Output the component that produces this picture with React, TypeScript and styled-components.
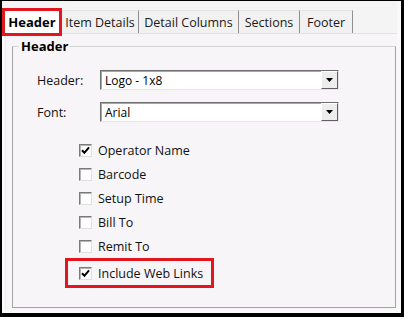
import React from 'react';
import styled, { createGlobalStyle } from 'styled-components';

const GlobalStyle = createGlobalStyle`
  html, body {
    margin: 0;
    padding: 0;
    background: #fff;
  }
  body {
    font-family: "Open Sans", "Noto Sans", sans-serif;
    color: #111;
  }
`;

const Frame = styled.div`
  width: 404px;
  height: 317px;
  box-sizing: border-box;
  border-style: solid;
  border-color: #000;
  border-width: 1px 3px 4px 2px;
  background: #f9f9f9;
  display: flex;
  flex-direction: column;
  padding: 0 4px 3px 0;
`;

const TabStrip = styled.div`
  height: 32px;
  display: flex;
  align-items: flex-end;
  background: #f4f4f4;
  flex-shrink: 0;
`;

const SelectedTab = styled.div`
  position: relative;
  z-index: 1;
  width: 60px;
  height: 28px;
  box-sizing: border-box;
  margin-bottom: -3px;
  border: 3px solid #e2161f;
  background: #fff;
  display: flex;
  align-items: center;
  justify-content: center;
  font-weight: 700;
  font-size: 13px;
  color: #000;
`;

const Tab = styled.div<{ $width: number }>`
  width: ${(p) => p.$width}px;
  height: 23px;
  box-sizing: border-box;
  border-top: 1px solid #e4e4e4;
  border-right: 1px solid #8f8f8f;
  background: #f1f1f1;
  display: flex;
  align-items: center;
  justify-content: center;
  font-size: 12.5px;
  color: #1a1a1a;
`;

const Page = styled.div`
  flex: 1;
  margin-left: 3px;
  display: flex;
  border-top: 1px solid #e2e2e2;
  border-left: 1px solid #ececec;
  background: #f7f5f8;
  padding: 3px 1px 2px 6px;
`;

const GroupBox = styled.fieldset`
  flex: 1;
  margin: 0;
  padding: 0;
  min-width: 0;
  border: 1px solid #a4a4a4;
  border-top-color: #d4d4d4;
  display: flex;
  flex-direction: column;
`;

const Legend = styled.legend`
  margin-left: 6px;
  padding: 0 2px;
  font-weight: 700;
  font-size: 13px;
  color: #000;
`;

const Body = styled.div`
  padding: 15px 0 0 24px;
  display: flex;
  flex-direction: column;
`;

const FieldRow = styled.div`
  display: grid;
  grid-template-columns: 63px 239px;
  align-items: center;
  height: 20px;
  & + & {
    margin-top: 12px;
  }
`;

const FieldLabel = styled.div`
  font-size: 12.5px;
`;

const ComboBox = styled.div`
  height: 20px;
  box-sizing: border-box;
  border: 1px solid;
  border-color: #6f6f6f #e6e6e6 #e6e6e6 #6f6f6f;
  box-shadow: inset 1px 1px 0 #a8a8a8;
  background: #fff;
  display: flex;
  align-items: center;
  justify-content: space-between;
`;

const ComboText = styled.span`
  padding-left: 4px;
  font-size: 12px;
  color: #000;
`;

const DropButton = styled.div`
  width: 17px;
  height: 18px;
  box-sizing: border-box;
  border: 1px solid;
  border-color: #fff #5f5f5f #5f5f5f #fff;
  background: #ededed;
  display: flex;
  align-items: center;
  justify-content: center;
`;

const CheckList = styled.div`
  margin: 16px 0 0 28px;
  display: flex;
  flex-direction: column;
`;

const CheckRow = styled.label`
  height: 24px;
  padding-left: 14px;
  display: flex;
  align-items: center;
  gap: 6px;
  font-size: 12.5px;
  color: #111;
`;

const HighlightRow = styled(CheckRow)`
  width: 149px;
  height: 30px;
  box-sizing: border-box;
  border: 3px solid #e2161f;
  padding-left: 11px;
`;

const Box = styled.span`
  width: 13px;
  height: 13px;
  box-sizing: border-box;
  border: 1px solid;
  border-color: #7a7a7a #e0e0e0 #e0e0e0 #7a7a7a;
  box-shadow: inset 1px 1px 0 #b4b4b4;
  background: #fff;
  display: flex;
  align-items: center;
  justify-content: center;
  flex-shrink: 0;
`;

const Arrow = () => (
  <svg width="7" height="4" viewBox="0 0 7 4">
    <path d="M0 0 H7 L3.5 4 Z" fill="#000" />
  </svg>
);

const CheckBox: React.FC<{ checked?: boolean }> = ({ checked }) => (
  <Box>
    {checked && (
      <svg width="9" height="9" viewBox="0 0 9 9">
        <path d="M1 4.2 L3.4 6.8 L8 1.4" stroke="#000" strokeWidth="2" fill="none" />
      </svg>
    )}
  </Box>
);

const tabs = [
  { label: 'Item Details', width: 77 },
  { label: 'Detail Columns', width: 100 },
  { label: 'Sections', width: 61 },
  { label: 'Footer', width: 53 },
];

const options = [
  { label: 'Operator Name', checked: true },
  { label: 'Barcode', checked: false },
  { label: 'Setup Time', checked: false },
  { label: 'Bill To', checked: false },
  { label: 'Remit To', checked: false },
];

export default function App() {
  return (
    <>
      <GlobalStyle />
      <Frame>
        <TabStrip>
          <SelectedTab>Header</SelectedTab>
          {tabs.map((t) => (
            <Tab key={t.label} $width={t.width}>
              {t.label}
            </Tab>
          ))}
        </TabStrip>
        <Page>
          <GroupBox>
            <Legend>Header</Legend>
            <Body>
              <FieldRow>
                <FieldLabel>Header:</FieldLabel>
                <ComboBox>
                  <ComboText>Logo - 1x8</ComboText>
                  <DropButton>
                    <Arrow />
                  </DropButton>
                </ComboBox>
              </FieldRow>
              <FieldRow>
                <FieldLabel>Font:</FieldLabel>
                <ComboBox>
                  <ComboText>Arial</ComboText>
                  <DropButton>
                    <Arrow />
                  </DropButton>
                </ComboBox>
              </FieldRow>
              <CheckList>
                {options.map((o) => (
                  <CheckRow key={o.label}>
                    <CheckBox checked={o.checked} />
                    {o.label}
                  </CheckRow>
                ))}
                <HighlightRow>
                  <CheckBox checked />
                  Include Web Links
                </HighlightRow>
              </CheckList>
            </Body>
          </GroupBox>
        </Page>
      </Frame>
    </>
  );
}
